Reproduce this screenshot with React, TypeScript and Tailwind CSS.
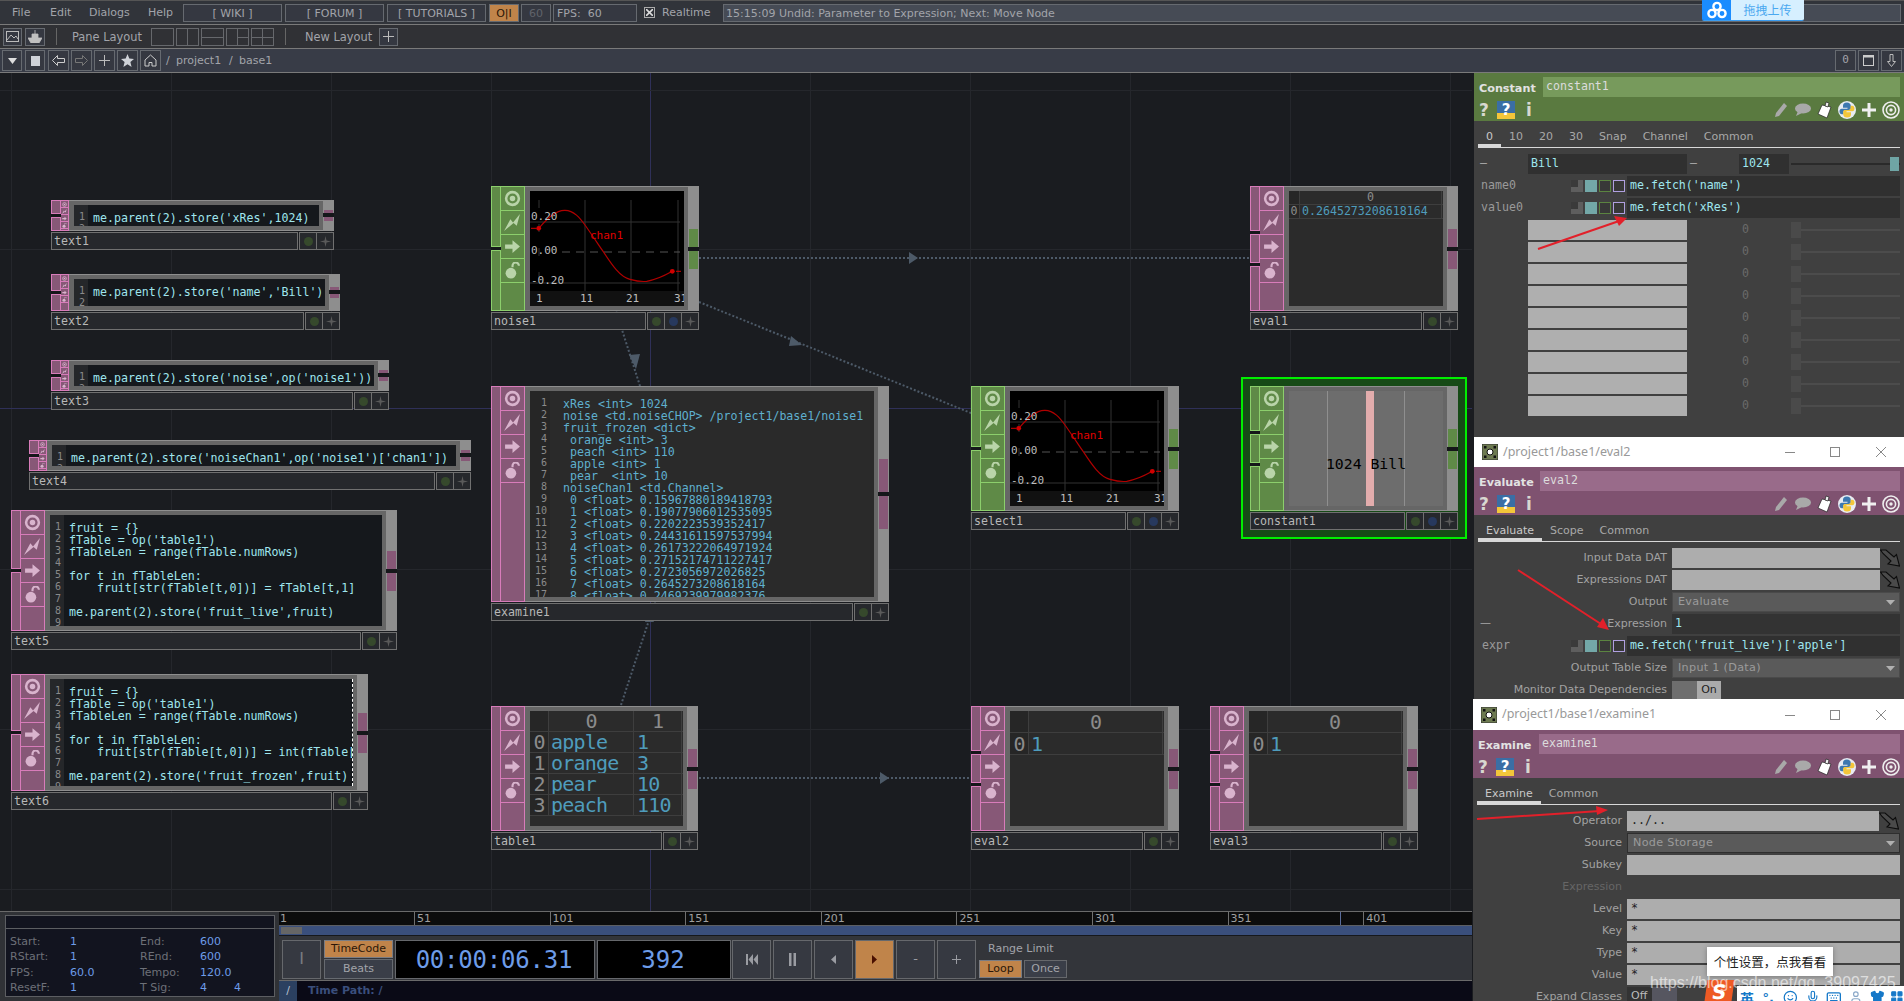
import React from "react";
import { Smile, Mic, Keyboard, User, Shirt, LayoutGrid } from "lucide-react";

const SANS = "[font-family:'DejaVu_Sans',sans-serif]";
const MONO = "[font-family:'DejaVu_Sans_Mono',monospace]";
const BTN = "border border-[#666a70] bg-[#353841]";

/* ---------- node side icons ---------- */
function Target({ s = 16, c = "#fff" }: { s?: number; c?: string }) {
  return (
    <svg width={s} height={s} viewBox="0 0 16 16">
      <circle cx="8" cy="8" r="6" fill="none" stroke={c} strokeWidth="2.4" />
      <circle cx="8" cy="8" r="2.6" fill={c} />
    </svg>
  );
}
function Bolt({ s = 16, c = "#fff" }: { s?: number; c?: string }) {
  return (
    <svg width={s} height={s} viewBox="0 0 16 16">
      <path d="M0 16 L6 5 L8.5 8 L15 0 L12 11 L9 8.5 Z" fill={c} />
    </svg>
  );
}
function RArrow({ s = 16, c = "#fff" }: { s?: number; c?: string }) {
  return (
    <svg width={s} height={s} viewBox="0 0 16 16">
      <path d="M1 6 H8 V2 L15 8 L8 14 V10 H1 Z" fill={c} />
    </svg>
  );
}
function OpenLock({ s = 16, c = "#fff" }: { s?: number; c?: string }) {
  return (
    <svg width={s} height={s} viewBox="0 0 16 16">
      <circle cx="6.5" cy="10.5" r="5" fill={c} />
      <path d="M8 5 V3.5 A3 3 0 0 1 14 3.5" fill="none" stroke={c} strokeWidth="2" />
    </svg>
  );
}

/* ---------- node ---------- */
type Kind = "dat" | "chop";
const KIND = {
  dat: { cell: "border-[#d87cba] bg-[#875877]", bar: "bg-[#875877]", icon: "#d9b3cd" },
  chop: { cell: "border-[#8ccf6c] bg-[#5f8a47]", bar: "bg-[#5f8a47]", icon: "#b9d4a9" },
};

function Node(props: {
  x: number; y: number; w: number; h: number; name: string; kind: Kind; small?: boolean;
  notches?: number; barH?: number; blue?: boolean; children?: React.ReactNode;
}) {
  const { x, y, w, h, name, kind, small, notches = 1, barH, blue, children } = props;
  const k = KIND[kind];
  const icons = [Target, Bolt, RArrow, OpenLock];
  const parts = notches === 2 ? [45, 27, 45] : notches === 1 ? [1, 1] : [1];
  const bh = barH ?? (small ? 3 : 18);
  return (
    <div className="absolute flex flex-col" style={{ left: x, top: y - 73, width: w }}>
      <div className="flex" style={{ height: h }}>
        <div className="w-[10px] flex flex-col shrink-0 gap-[3px] bg-[#15171a]">
          {parts.map((p, i) => (
            <div key={i} className={`border ${k.cell} min-h-0`} style={{ flex: p }} />
          ))}
        </div>
        <div className={`${small ? "w-[8px]" : "w-[24px]"} shrink-0 flex flex-col border-r border-t border-b ${k.cell}`}>
          {icons.map((I, i) => (
            <div key={i} className={`${small ? "h-[7px]" : "h-[24px]"} shrink-0 flex items-center justify-center border-b ${k.cell}`}>
              <I s={small ? 5 : 17} c={k.icon} />
            </div>
          ))}
        </div>
        <div className="flex-1 min-w-0 bg-[#666] border-t border-b border-[#8e8e8e] pt-[4px] pb-[4px] pl-[5px] pr-[4px]">
          {children}
        </div>
        <div className="w-[11px] shrink-0 bg-[#8e8e8e] flex flex-col justify-center">
          <div className={`${k.bar} ml-[1px] mr-[1px]`} style={{ height: bh }} />
          <div className="h-[4px] bg-[#15171a]" />
          <div className={`${k.bar} ml-[1px] mr-[1px]`} style={{ height: small ? 4 : bh }} />
        </div>
      </div>
      <div className={`mt-[1px] h-[18px] flex gap-[1px] ${MONO} text-[11.6px] text-[#b8b8b8]`}>
        <div className="flex-1 min-w-0 border border-[#707070] bg-[#26282c] pl-[2px] leading-[17px]">{name}</div>
        <div className="flex border border-[#707070] bg-[#26282c]">
          <div className="w-[17px] flex items-center justify-center border-r border-[#707070]">
            <div className="w-[9px] h-[9px] rounded-full bg-[#36492c]" />
          </div>
          {blue && (
            <div className="w-[17px] flex items-center justify-center border-r border-[#707070]">
              <div className="w-[9px] h-[9px] rounded-full bg-[#27395e]" />
            </div>
          )}
          <div className="w-[16px] flex items-center justify-center">
            <svg width="11" height="11" viewBox="0 0 11 11"><path d="M5.5 0 L6.5 4.5 L11 5.5 L6.5 6.5 L5.5 11 L4.5 6.5 L0 5.5 L4.5 4.5 Z" fill="#5a5a5a" /></svg>
          </div>
        </div>
      </div>
    </div>
  );
}

/* ---------- node contents ---------- */
function Code({ lines, n, g = 14, pl = 5, dark = true, fade = false, edge = false }: { lines: string[]; n: number; g?: number; pl?: number; dark?: boolean; fade?: boolean; edge?: boolean }) {
  return (
    <div className={`h-full flex overflow-hidden ${MONO} text-[11.6px] leading-[12px] ${dark ? "bg-[#15181c]" : "bg-[#2a2a2a]"} ${edge ? "border-r border-dashed border-white" : ""}`}>
      <div className={`shrink-0 pt-[6px] pr-[3px] text-right text-[10px] text-[#8a8a8a] ${dark ? "bg-[#25272a]" : "bg-[#262626]"}`} style={{ width: g }}>
        {Array.from({ length: n }, (_, i) => <div key={i} className="h-[12px]">{i + 1}</div>)}
      </div>
      <div className={`pt-[7px] whitespace-pre ${fade ? "text-[#5fb0cf]" : "text-[#9fe6ee]"}`} style={{ paddingLeft: pl }}>
        {lines.map((l, i) => <div key={i} className="h-[12px]">{l || " "}</div>)}
      </div>
    </div>
  );
}

function Table({ cols, rows, rowH, size, header, big }: { cols: number[]; rows: string[][]; rowH: number; size: number; header: string[]; big?: boolean }) {
  const all = [header, ...rows];
  return (
    <div className={`h-full bg-[#2b2b2b] overflow-hidden ${MONO} ${big ? "tracking-[-0.8px]" : ""}`} style={{ fontSize: size }}>
      {all.map((r, ri) => (
        <div key={ri} className="flex border-b border-[#3e3e3e]" style={{ height: rowH }}>
          {r.map((c, ci) => (
            <div
              key={ci}
              className={`shrink-0 border-r border-[#3e3e3e] overflow-hidden whitespace-nowrap flex items-center ${
                ri === 0 ? "justify-center text-[#8c8c8c]" : ci === 0 ? "justify-center text-[#8c8c8c] bg-[#262626]" : ci === 2 ? "pl-[3px] text-[#4f9cbc]" : "pl-[2px] text-[#4f9cbc]"
              } ${ri === 0 && ci === 0 ? "bg-[#262626]" : ""}`}
              style={{ width: cols[ci] }}
            >
              {c}
            </div>
          ))}
        </div>
      ))}
    </div>
  );
}

function Chart() {
  const f = "'DejaVu Sans Mono',monospace";
  return (
    <svg width="154" height="115" viewBox="0 0 154 115" className="block bg-black">
      <g stroke="#333" strokeWidth="1">
        <line x1="0" x2="150" y1="31" y2="31" />
        <line x1="0" x2="150" y1="92" y2="92" />
        <line x1="55" x2="55" y1="9" y2="100" />
        <line x1="101" x2="101" y1="9" y2="100" />
        <line x1="148" x2="148" y1="9" y2="100" />
        <line x1="9" x2="9" y1="9" y2="100" strokeDasharray="8 16" />
      </g>
      <line x1="32" x2="150" y1="61" y2="61" stroke="#555" strokeDasharray="8 6" />
      <rect x="0" y="100" width="154" height="15" fill="#111" />
      <path d="M8.7 37.3 C18 27 26 19 35 19.3 C44 19.5 50 27 55 34 C62 44 66 50 73.3 60.7 C82 74 90 86 100 88.3 C106 90 111 91 116.7 90.3 C125 89 134 85 142.3 80.3" fill="none" stroke="#b00000" strokeWidth="1.2" />
      <circle cx="8.7" cy="37.3" r="2.4" fill="#d00000" />
      <circle cx="142.3" cy="80.3" r="2.4" fill="#d00000" />
      <line x1="1" x2="6" y1="37.3" y2="37.3" stroke="#d00000" />
      <line x1="146" x2="151" y1="80.3" y2="80.3" stroke="#d00000" />
      <g fontFamily={f} fontSize="11" fill="#bdbdbd">
        <text x="1" y="29">0.20</text>
        <text x="1" y="63">0.00</text>
        <text x="1" y="93">-0.20</text>
        <text x="6" y="111">1</text>
        <text x="50" y="111">11</text>
        <text x="96" y="111">21</text>
        <text x="144" y="111">31</text>
      </g>
      <text x="60" y="48" fontFamily={f} fontSize="11" fill="#e00000">chan1</text>
    </svg>
  );
}

/* ---------- param panel pieces ---------- */
function PyIcon() {
  const d = "M9 1.5 C6 1.5 5 2.8 5 4.8 V6.8 H9.5 V7.8 H3.8 C2.2 7.8 1.5 9 1.5 10.5 C1.5 12 2.4 13.2 3.8 13.2 H5.4 V11 C5.4 9.8 6.4 9 7.5 9 H11 C12 9 12.8 8.3 12.8 7.3 V4.8 C12.8 2.8 11.2 1.5 9 1.5 Z";
  return (
    <svg width="18" height="18" viewBox="0 0 18 18">
      <circle cx="9" cy="9" r="9" fill="#e8ecf2" />
      <path d={d} fill="#3d78b0" />
      <path d={d} fill="#f3c63a" transform="rotate(180 9 9)" />
    </svg>
  );
}
function Head({ title, name, tw, bg, field }: { title: string; name: string; tw: string; bg: string; field: string }) {
  return (
    <div className={`h-[48px] shrink-0 ${bg} flex flex-col`}>
      <div className="h-[25px] pt-[4px] flex">
        <div className={`${tw} pl-[5px] pt-[4px] font-bold text-[11.2px] leading-[15px] text-[#e2e2e2]`}>{title}</div>
        <div className={`flex-1 mr-[4px] h-[20px] ${field} pl-[3px] ${MONO} text-[11.6px] leading-[19px] text-[#dcdcdc]`}>{name}</div>
      </div>
      <div className="flex-1 flex items-center pl-[5px] pr-[4px]">
        <span className="font-bold text-[17px] text-[#d8d8d0] w-[18px] leading-[18px]">?</span>
        <div className="w-[18px] h-[18px] relative overflow-hidden bg-[#3a6ea5] text-center font-bold text-[15px] leading-[18px] text-white">
          <div className="absolute left-0 right-0 bottom-0 h-[6px] bg-[#f3c63a]" />
          <span className="relative">?</span>
        </div>
        <span className="font-bold text-[17px] text-[#d8d8d0] ml-[11px] leading-[18px]">i</span>
        <div className="flex-1" />
        <svg width="14" height="16" viewBox="0 0 14 16" className="mr-[6px]"><path d="M10 1 L13 4 L5 14 L1 15 L2 11 Z" fill="#a9a9a9" /></svg>
        <svg width="17" height="13" viewBox="0 0 17 13" className="mr-[5px]"><ellipse cx="9" cy="5.5" rx="8" ry="5" fill="#a9a9a9" /><path d="M4 8 L2 13 L8 10 Z" fill="#a9a9a9" /></svg>
        <svg width="18" height="18" viewBox="0 0 18 18" className="mr-[4px]"><path d="M6 4 L15 6 L11 17 L2 13 Z" fill="#fff" stroke="#222" strokeWidth=".7" /><path d="M10 1 L13 2 L12 6 L9 5 Z" fill="#eee" stroke="#222" strokeWidth=".7" /></svg>
        <PyIcon />
        <svg width="14" height="14" viewBox="0 0 14 14" className="ml-[6px] mr-[6px]"><path d="M5.5 0 H8.5 V5.5 H14 V8.5 H8.5 V14 H5.5 V8.5 H0 V5.5 H5.5 Z" fill="#f0f0f0" /></svg>
        <svg width="18" height="18" viewBox="0 0 18 18"><circle cx="9" cy="9" r="8" fill="none" stroke="#eee" strokeWidth="1.6" /><circle cx="9" cy="9" r="4.6" fill="none" stroke="#eee" strokeWidth="1.6" /><circle cx="9" cy="9" r="1.7" fill="#eee" /></svg>
      </div>
    </div>
  );
}
function Tabs({ items }: { items: string[] }) {
  return (
    <div className="h-[27px] shrink-0 ml-[4px] mr-[4px] flex border-b border-[#d8d8d8] text-[11px] text-[#a8a8a8]">
      {items.map((t, i) => (
        <div key={t} className={`pt-[8px] px-[8px] ${i === 0 ? "border-b-[3px] border-[#d8d8d8] text-[#c8c8c8]" : ""}`}>{t}</div>
      ))}
    </div>
  );
}
function WinTitle({ text, h = "h-[30px]" }: { text: string; h?: string }) {
  return (
    <div className={`${h} shrink-0 bg-white flex items-center pl-[8px] [font-family:'Noto_Sans',sans-serif] text-[12.5px] text-[#999]`}>
      <svg width="16" height="16" viewBox="0 0 16 16" className="mr-[5px]">
        <rect x="0" y="0" width="16" height="16" fill="#6d7a50" stroke="#333" />
        <rect x="2" y="2" width="2.5" height="2.5" fill="#111" /><rect x="11.5" y="2" width="2.5" height="2.5" fill="#111" />
        <rect x="2" y="11.5" width="2.5" height="2.5" fill="#111" /><rect x="11.5" y="11.5" width="2.5" height="2.5" fill="#111" />
        <circle cx="8" cy="8" r="3" fill="#fff" stroke="#111" />
      </svg>
      <span>{text}</span>
      <div className="flex-1" />
      <svg width="10" height="10" viewBox="0 0 10 10" className="mr-[35px]"><line x1="0" x2="10" y1="5.5" y2="5.5" stroke="#888" /></svg>
      <svg width="10" height="10" viewBox="0 0 10 10" className="mr-[36px]"><rect x=".5" y=".5" width="9" height="9" fill="none" stroke="#888" /></svg>
      <svg width="10" height="10" viewBox="0 0 10 10" className="mr-[18px]"><path d="M0 0 L10 10 M10 0 L0 10" stroke="#888" /></svg>
    </div>
  );
}
function Squares() {
  return (
    <div className="flex gap-[2px] items-center">
      <div className="w-[12px] h-[12px] bg-[#5e5e5e] relative"><div className="absolute left-0 top-0 w-[7px] h-[7px] bg-[#3a3a3a]" /></div>
      <div className="w-[12px] h-[12px] bg-[#73a8a8]" />
      <div className="w-[12px] h-[12px] border border-[#5b8440] bg-[#383838]" />
      <div className="w-[12px] h-[12px] border border-[#b0a0e0] bg-[#383838]" />
    </div>
  );
}
function DropArrow() {
  return (
    <svg width="20" height="18" viewBox="0 0 20 18" className="shrink-0">
      <path d="M0.5 1 H6 L14 8 L16.5 5.5 L19.5 17 L8 15 L11 12 L3 4.5 Z" fill="#4a4a4a" stroke="#0c0c0c" strokeWidth="1.1" />
    </svg>
  );
}
function Row({ label, lw, dim, dash, children }: { label: string; lw: string; dim?: boolean; dash?: boolean; children: React.ReactNode }) {
  return (
    <div className="h-[22px] flex items-center">
      <div className={`${lw} shrink-0 relative text-right pr-[5px] pt-[1px] text-[11px] ${dim ? "text-[#666]" : "text-[#a2a2a2]"}`}>
        {dash && <span className="absolute left-[6px] top-0 text-[#aaa]">—</span>}
        {label}
      </div>
      {children}
    </div>
  );
}
function Gray({ children, w = "flex-1" }: { children?: React.ReactNode; w?: string }) {
  return <div className={`${w} h-[20px] bg-[#adadad] pl-[4px] ${MONO} text-[11.6px] leading-[18px] text-[#222]`}>{children}</div>;
}
function Select({ text, dark }: { text: string; dark?: boolean }) {
  return (
    <div className={`flex-1 mr-[4px] h-[20px] bg-[#5a5a5a] border ${dark ? "border-[#2e2e2e]" : "border-[#4a4a4a]"} flex items-center pl-[5px] pr-[4px] text-[11.2px] text-[#9a9a9a]`}>
      <span className="flex-1 tracking-[0.3px]">{text}</span>
      <svg width="9" height="5" viewBox="0 0 9 5"><path d="M0 0 H9 L4.5 5 Z" fill="#b0b0b0" /></svg>
    </div>
  );
}

/* ---------- toolbar small ---------- */
function LayoutBtn({ children }: { children?: React.ReactNode }) {
  return <div className="w-[23px] h-[18px] border border-[#66686c] relative flex-none">{children}</div>;
}

const text5 = ["fruit = {}", "fTable = op('table1')", "fTableLen = range(fTable.numRows)", "", "for t in fTableLen:", "    fruit[str(fTable[t,0])] = fTable[t,1]", "", "me.parent(2).store('fruit_live',fruit)"];
const text6 = ["fruit = {}", "fTable = op('table1')", "fTableLen = range(fTable.numRows)", "", "for t in fTableLen:", "    fruit[str(fTable[t,0])] = int(fTable[t,1])", "", "me.parent(2).store('fruit_frozen',fruit)"];
const examine = [
  "xRes <int> 1024", "noise <td.noiseCHOP> /project1/base1/noise1", "fruit_frozen <dict>", " orange <int> 3", " peach <int> 110", " apple <int> 1", " pear  <int> 10", "noiseChan1 <td.Channel>",
  " 0 <float> 0.15967880189418793", " 1 <float> 0.19077906012535095", " 2 <float> 0.2202223539352417", " 3 <float> 0.24431611597537994", " 4 <float> 0.26173222064971924", " 5 <float> 0.27152174711227417", " 6 <float> 0.2723056972026825", " 7 <float> 0.2645273208618164", " 8 <float> 0.2469239979982376",
];

const vLines = [11, 171, 331, 491, 650, 810, 970, 1130, 1290, 1450];
const hLines = [90, 249, 408, 569, 729, 889];
const ticks = ["51", "101", "151", "201", "251", "301", "351", "401"];

function Transport({ children, active }: { children: React.ReactNode; active?: boolean }) {
  return (
    <div className={`w-[39px] h-[39px] shrink-0 border border-[#66686c] flex items-center justify-center text-[#9a9ca2] ${active ? "bg-[#c0844a]" : "bg-[#363941]"}`}>
      {children}
    </div>
  );
}

export default function App() {
  return (
    <div className={`relative w-[1904px] h-[1001px] overflow-hidden bg-[#1a1c20] ${SANS}`}>
      {/* row 1 */}
      <div className="h-[25px] bg-[#31343a] border-t border-[#555] border-b border-b-[#7a7a7a] flex items-center pl-[12px] text-[11px] text-[#a2a4aa]">
        <span className="w-[38px] pt-[1px]">File</span>
        <span className="w-[39px] pt-[1px]">Edit</span>
        <span className="w-[59px] pt-[1px]">Dialogs</span>
        <span className="w-[35px] pt-[1px]">Help</span>
        <div className={`w-[99px] h-[18px] ${BTN} text-center leading-[17px]`}>[ WIKI ]</div>
        <div className={`w-[99px] h-[18px] ml-[3px] ${BTN} text-center leading-[17px]`}>[ FORUM ]</div>
        <div className={`w-[99px] h-[18px] ml-[3px] ${BTN} text-center leading-[17px]`}>[ TUTORIALS ]</div>
        <div className="w-[30px] h-[18px] ml-[3px] border border-[#666a70] bg-[#c0844a] text-center leading-[17px] text-[#2a1608]">O|I</div>
        <div className={`w-[30px] h-[18px] ml-[2px] ${BTN} text-center leading-[17px] text-[#60636a]`}>60</div>
        <div className={`w-[84px] h-[18px] ml-[2px] ${BTN} pl-[3px] leading-[17px] whitespace-pre`}>FPS:  60</div>
        <div className="w-[11px] h-[11px] ml-[7px] border border-[#aaa] flex items-center justify-center">
          <svg width="7" height="7" viewBox="0 0 7 7"><path d="M0 0 L7 7 M7 0 L0 7" stroke="#ddd" strokeWidth="1.6" /></svg>
        </div>
        <span className="ml-[7px] w-[61px] pt-[1px]">Realtime</span>
        <div className="flex-1 h-[18px] mr-[3px] border border-[#666a70] bg-[#464b55] pl-[2px] leading-[17px] whitespace-pre">15:15:09 Undid: Parameter to Expression; Next: Move Node</div>
      </div>
      {/* row 2 */}
      <div className="h-[24px] bg-[#303135] border-b border-[#7a7a7a] flex items-center pl-[3px] text-[11.4px] text-[#a2a4aa]">
        <div className={`w-[19px] h-[18px] ${BTN} flex items-center justify-center`}>
          <svg width="13" height="11" viewBox="0 0 13 11"><rect x=".5" y=".5" width="12" height="10" fill="none" stroke="#bbb" /><path d="M1 9 L5 4 L8 7 L10 5 L12 8" fill="none" stroke="#bbb" /></svg>
        </div>
        <div className={`w-[20px] h-[18px] ml-[3px] ${BTN} flex items-center justify-center`}>
          <svg width="14" height="13" viewBox="0 0 14 13"><path d="M7 0 V4 M4 4 H10 V8 H14 L11 13 H3 L0 8 H4 Z" fill="#c0c0c0" stroke="#c0c0c0" strokeWidth=".8" /></svg>
        </div>
        <div className="w-px h-[17px] bg-[#666] ml-[11px]" />
        <span className="ml-[15px] w-[79px] pt-[2px]">Pane Layout</span>
        <LayoutBtn />
        <div className="ml-[2px]"><LayoutBtn><div className="absolute left-[10px] top-0 bottom-0 w-px bg-[#66686c]" /></LayoutBtn></div>
        <div className="ml-[2px]"><LayoutBtn><div className="absolute left-0 right-0 top-[8px] h-px bg-[#66686c]" /></LayoutBtn></div>
        <div className="ml-[2px]"><LayoutBtn><div className="absolute left-[10px] top-0 bottom-0 w-px bg-[#66686c]" /><div className="absolute left-[10px] right-0 top-[8px] h-px bg-[#66686c]" /></LayoutBtn></div>
        <div className="ml-[2px]"><LayoutBtn><div className="absolute left-[10px] top-0 bottom-0 w-px bg-[#66686c]" /><div className="absolute left-0 right-0 top-[8px] h-px bg-[#66686c]" /></LayoutBtn></div>
        <div className="w-px h-[17px] bg-[#666] ml-[11px]" />
        <span className="ml-[19px] w-[74px] pt-[2px]">New Layout</span>
        <div className={`w-[19px] h-[18px] ${BTN} flex items-center justify-center`}>
          <svg width="11" height="11" viewBox="0 0 11 11"><path d="M5.5 0 V11 M0 5.5 H11" stroke="#bbb" /></svg>
        </div>
      </div>
      {/* row 3 */}
      <div className="h-[24px] bg-[#383c47] border-b border-[#7a7a7a] flex items-center pl-[2px] pr-[2px] text-[11px] text-[#a2a4aa]">
        <div className={`w-[20px] h-[21px] ${BTN} flex items-center justify-center`}><svg width="9" height="6" viewBox="0 0 9 6"><path d="M0 0 H9 L4.5 6 Z" fill="#ddd" /></svg></div>
        <div className={`w-[20px] h-[21px] ml-[3px] ${BTN} flex items-center justify-center`}><div className="w-[9px] h-[10px] bg-[#cfd2d8]" /></div>
        <div className={`w-[21px] h-[21px] ml-[3px] ${BTN} flex items-center justify-center`}><svg width="13" height="11" viewBox="0 0 13 11"><path d="M5.5 .5 L.5 5.5 L5.5 10.5 V7.5 H12.5 V3.5 H5.5 Z" fill="none" stroke="#ccc" /></svg></div>
        <div className={`w-[21px] h-[21px] ml-[2px] ${BTN} flex items-center justify-center`}><svg width="13" height="11" viewBox="0 0 13 11"><path d="M7.5 .5 L12.5 5.5 L7.5 10.5 V7.5 H.5 V3.5 H7.5 Z" fill="none" stroke="#777" /></svg></div>
        <div className={`w-[21px] h-[21px] ml-[2px] ${BTN} flex items-center justify-center`}><svg width="11" height="11" viewBox="0 0 11 11"><path d="M5.5 0 V11 M0 5.5 H11" stroke="#bbb" /></svg></div>
        <div className={`w-[21px] h-[21px] ml-[2px] ${BTN} flex items-center justify-center`}><svg width="13" height="13" viewBox="0 0 13 13"><path d="M6.5 0 L8.3 4.6 L13 5 L9.4 8 L10.6 13 L6.5 10.3 L2.4 13 L3.6 8 L0 5 L4.7 4.6 Z" fill="#cfd2d8" /></svg></div>
        <div className={`w-[21px] h-[21px] ml-[2px] ${BTN} flex items-center justify-center`}><svg width="13" height="13" viewBox="0 0 13 13"><path d="M6.5 1 L12 6 V12 H8 V8.5 H5 V12 H1 V6 Z" fill="none" stroke="#ccc" /></svg></div>
        <span className="ml-[5px] pt-[1px] w-[10px]">/</span>
        <span className="pt-[1px] w-[53px]">project1</span>
        <span className="pt-[1px] w-[10px]">/</span>
        <span className="pt-[1px]">base1</span>
        <div className="flex-1" />
        <div className={`w-[21px] h-[21px] ${BTN} flex items-center justify-center ${MONO}`}>0</div>
        <div className={`w-[21px] h-[21px] ml-[2px] ${BTN} flex items-center justify-center`}><svg width="11" height="11" viewBox="0 0 11 11"><rect x=".5" y=".5" width="10" height="10" fill="none" stroke="#ccc" /><rect x="0" y="0" width="11" height="2.5" fill="#ccc" /></svg></div>
        <div className={`w-[21px] h-[21px] ml-[2px] ${BTN} flex items-center justify-center`}><svg width="9" height="13" viewBox="0 0 9 13"><path d="M3 .5 H6 V7.5 H8.5 L4.5 12.5 L.5 7.5 H3 Z" fill="none" stroke="#bbb" /></svg></div>
      </div>

      <div className="flex h-[928px]">
        {/* left column */}
        <div className="w-[1472px] flex flex-col shrink-0">
          {/* network */}
          <div className="relative h-[838px] overflow-hidden bg-[#1a1c20]">
            {vLines.map((x) => (
              <div key={x} className={`absolute top-0 bottom-0 w-px ${x === 650 ? "bg-[#2f3058]" : "bg-[#25272c]"}`} style={{ left: x }} />
            ))}
            {hLines.map((y) => (
              <div key={y} className={`absolute left-0 right-0 h-px ${y === 408 ? "bg-[#2f3058]" : "bg-[#25272c]"}`} style={{ top: y - 73 }} />
            ))}

            {/* wires */}
            <svg className="absolute left-0 top-0" width="1472" height="838" viewBox="0 73 1472 838">
              <g stroke="#4d5a68" strokeWidth="2" strokeDasharray="2 2" fill="none">
                <line x1="699" y1="258" x2="1252" y2="258" />
                <line x1="699" y1="302" x2="1010" y2="429" />
                <line x1="615" y1="308" x2="640" y2="386" />
                <line x1="621" y1="705" x2="655" y2="602" />
                <line x1="699" y1="778" x2="971" y2="778" />
              </g>
              <g fill="#4d5a68">
                <path d="M909 252 L918 258 L909 264 Z" />
                <path d="M791 336 L802 345 L789 346 Z" />
                <path d="M629 355 L636 369 L640 354 Z" />
                <path d="M649 610 L654 622 L645 622 Z" />
                <path d="M880 772 L889 778 L880 784 Z" />
              </g>
            </svg>

            <Node x={51} y={200} w={283} h={31} name="text1" kind="dat" small>
              <Code n={2} lines={["me.parent(2).store('xRes',1024)"]} />
            </Node>
            <Node x={51} y={274} w={289} h={37} name="text2" kind="dat" small>
              <Code n={2} lines={["me.parent(2).store('name','Bill')"]} />
            </Node>
            <Node x={51} y={360} w={338} h={31} name="text3" kind="dat" small>
              <Code n={2} lines={["me.parent(2).store('noise',op('noise1'))"]} />
            </Node>
            <Node x={29} y={440} w={442} h={31} name="text4" kind="dat" small>
              <Code n={2} lines={["me.parent(2).store('noiseChan1',op('noise1')['chan1'])"]} />
            </Node>
            <Node x={11} y={510} w={386} h={121} name="text5" kind="dat">
              <Code n={9} pl={5} lines={text5} />
            </Node>
            <Node x={11} y={674} w={357} h={117} name="text6" kind="dat">
              <Code n={9} pl={5} lines={text6} edge />
            </Node>

            <Node x={491} y={186} w={208} h={125} name="noise1" kind="chop" blue>
              <Chart />
            </Node>
            <Node x={971} y={386} w={208} h={125} name="select1" kind="chop" blue notches={1}>
              <Chart />
            </Node>

            <Node x={491} y={386} w={398} h={216} name="examine1" kind="dat" notches={0} barH={33}>
              <Code n={17} g={20} pl={13} dark={false} fade lines={examine} />
            </Node>

            <Node x={491} y={706} w={207} h={125} name="table1" kind="dat" notches={0}>
              <Table
                big
                cols={[19, 85, 48]}
                rowH={21}
                size={20}
                header={["", "0", "1"]}
                rows={[["0", "apple", "1"], ["1", "orange", "3"], ["2", "pear", "10"], ["3", "peach", "110"]]}
              />
            </Node>
            <Node x={971} y={706} w={208} h={125} name="eval2" kind="dat" notches={2}>
              <Table big cols={[19, 134]} rowH={22} size={20} header={["", "0"]} rows={[["0", "1"]]} />
            </Node>
            <Node x={1210} y={706} w={208} h={125} name="eval3" kind="dat" notches={2}>
              <Table big cols={[19, 134]} rowH={22} size={20} header={["", "0"]} rows={[["0", "1"]]} />
            </Node>
            <Node x={1250} y={186} w={208} h={125} name="eval1" kind="dat" notches={2}>
              <Table cols={[11, 142]} rowH={14} size={11.6} header={["", "0"]} rows={[["0", "0.2645273208618164"]]} />
            </Node>

            {/* selected */}
            <div className="absolute border-2 border-[#00ee00] bg-[#164a16]" style={{ left: 1241, top: 377 - 73, width: 226, height: 162 }} />
            <Node x={1250} y={386} w={208} h={125} name="constant1" kind="chop" notches={2} blue>
              <div className={`relative h-full bg-[#6d6d6d] flex items-center justify-center pt-[32px] ${MONO} text-[14.8px] text-black`}>
                <div className="absolute left-[38px] top-0 bottom-0 w-px bg-[#8f8f8f]" />
                <div className="absolute left-[115px] top-0 bottom-0 w-px bg-[#8f8f8f]" />
                <div className="absolute left-[77px] top-0 bottom-0 w-[8px] bg-[#e3adad]" />
                <span className="relative whitespace-pre">1024 Bill</span>
              </div>
            </Node>
          </div>

          {/* bottom bar */}
          <div className="h-[90px] bg-[#303236] border-t border-[#6a6a6a] flex">
            <div className="w-[279px] shrink-0 p-[4px] pl-[5px] pt-[3px]">
              <div className="h-[82px] w-[270px] border border-[#5c5e62] bg-[#12141f] text-[11px]">
                <div className="h-[13px] border-b border-[#5c5e62]" />
                <div className="grid grid-cols-[60px_70px_60px_34px_34px] pl-[4px] pt-[5px] leading-[15.4px] text-[#6d7078]">
                  <span>Start:</span><span className="text-[#6d9ce8]">1</span><span>End:</span><span className="text-[#6d9ce8]">600</span><span />
                  <span>RStart:</span><span className="text-[#6d9ce8]">1</span><span>REnd:</span><span className="text-[#6d9ce8]">600</span><span />
                  <span>FPS:</span><span className="text-[#6d9ce8]">60.0</span><span>Tempo:</span><span className="text-[#6d9ce8]">120.0</span><span />
                  <span>ResetF:</span><span className="text-[#6d9ce8]">1</span><span>T Sig:</span><span className="text-[#6d9ce8]">4</span><span className="text-[#6d9ce8]">4</span>
                </div>
              </div>
            </div>
            <div className="flex-1 min-w-0 flex flex-col">
              <div className="relative h-[14px] bg-[#0c0c0c] border-b border-[#5c5e62] flex text-[11px] leading-[13px] text-[#a0a0a0]">
                <div className="w-[135px] shrink-0 pl-[1px]">1</div>
                {ticks.map((t) => (
                  <div key={t} className="w-[135.6px] shrink-0 border-l border-[#707070] pl-[2px]">{t}</div>
                ))}
                <div className="absolute left-[1061px] top-0 bottom-0 w-[1px] bg-[#5a6c9a]" />
              </div>
              <div className="h-[10px] bg-[#3a4f7c] border-b border-[#16181c] flex pl-[2px] pt-[1px]">
                <div className="w-[21px] h-[7px] bg-[#666]" />
              </div>
              <div className="h-[45px] bg-[#33353a] border-b border-[#6a6a6a] flex items-center pl-[3px] pt-[2px] gap-[2px]">
                <Transport><span className="text-[#7a7c82]">I</span></Transport>
                <div className="w-[69px] ml-[1px] flex flex-col gap-[1px]">
                  <div className="h-[18px] border border-[#7a7c82] bg-[#c0844a] text-center text-[11px] leading-[16px] text-[#2a1608]">TimeCode</div>
                  <div className="h-[20px] border border-[#666a70] bg-[#3a3e48] text-center text-[11px] leading-[18px] text-[#a2a4aa]">Beats</div>
                </div>
                <div className={`w-[200px] h-[39px] bg-black border border-[#66686c] flex items-center justify-center pt-[2px] pr-[2px] ${MONO} text-[24px] tracking-[-0.2px] text-[#6d9ce8]`}>00:00:06.31</div>
                <div className={`w-[134px] h-[39px] bg-black border border-[#66686c] flex items-center justify-center pt-[2px] pr-[2px] ${MONO} text-[24px] text-[#6d9ce8]`}>392</div>
                <div className="-ml-[1px]"><Transport><svg width="12" height="11" viewBox="0 0 12 11"><path d="M0 0 H2 V11 H0 Z M7 0 V11 L2.5 5.5 Z M12 0 V11 L7.5 5.5 Z" fill="#9a9ca2" /></svg></Transport></div>
                <Transport><svg width="7" height="13" viewBox="0 0 7 13"><path d="M0 0 H2.5 V13 H0 Z M4.5 0 H7 V13 H4.5 Z" fill="#9a9ca2" /></svg></Transport>
                <Transport><svg width="5" height="9" viewBox="0 0 5 9"><path d="M5 0 V9 L0 4.5 Z" fill="#9a9ca2" /></svg></Transport>
                <Transport active><svg width="5" height="9" viewBox="0 0 5 9"><path d="M0 0 V9 L5 4.5 Z" fill="#4a0f00" /></svg></Transport>
                <Transport><span className="text-[13px]">-</span></Transport>
                <Transport><svg width="9" height="9" viewBox="0 0 9 9"><path d="M4.5 0 V9 M0 4.5 H9" stroke="#9a9ca2" /></svg></Transport>
                <div className="ml-[1px] flex flex-col text-[11px]">
                  <div className="h-[20px] pl-[9px] pt-[1px] text-[#a2a4aa]">Range Limit</div>
                  <div className="flex gap-[2px]">
                    <div className="w-[43px] h-[18px] border border-[#7a7c82] bg-[#c0844a] text-center leading-[16px] text-[#2a1608]">Loop</div>
                    <div className="w-[43px] h-[18px] border border-[#66686c] bg-[#3a3e48] text-center leading-[16px] text-[#a2a4aa]">Once</div>
                  </div>
                </div>
              </div>
              <div className="flex-1 bg-[#0a0a16] flex items-center text-[11px] font-bold text-[#3a4f7c]">
                <div className="w-[18px] h-full bg-[#2b4060] text-center leading-[20px] text-[#b8c0d0] font-normal">/</div>
                <span className="ml-[11px]">Time Path: /</span>
              </div>
            </div>
          </div>
        </div>

        {/* parameter panels */}
        <div className="w-[432px] shrink-0 flex flex-col pl-[2px] bg-[#1a1c20]">
          <div className="h-[364px] shrink-0 bg-[#404040] overflow-hidden">
            <Head title="Constant" name="constant1" tw="w-[69px]" bg="bg-[#5a7a40]" field="bg-[#779a5c]" />
            <Tabs items={["0", "10", "20", "30", "Snap", "Channel", "Common"]} />
            <div className={`pt-[5px] ${MONO} text-[11.6px]`}>
              <div className="h-[22px] flex items-center">
                <span className="w-[54px] pl-[6px] text-[#aaa]">—</span>
                <div className="w-[159px] h-[20px] bg-[#303030] pl-[3px] leading-[19px] text-[#9fe6ee]">Bill</div>
                <span className="w-[52px] pl-[3px] text-[#aaa]">—</span>
                <div className="w-[50px] h-[20px] bg-[#303030] pl-[3px] leading-[19px] text-[#9fe6ee]">1024</div>
                <div className="flex-1 relative h-[20px] ml-[2px] mr-[4px]">
                  <div className="absolute left-0 right-0 top-[9px] h-[2px] bg-[#2a2a2a]" />
                  <div className="absolute right-[1px] top-[3px] w-[9px] h-[14px] bg-[#6fa5a5]" />
                </div>
              </div>
              {[["name0", "me.fetch('name')"], ["value0", "me.fetch('xRes')"]].map(([l, e]) => (
                <div key={l} className="h-[22px] flex items-center">
                  <span className="w-[97px] pl-[7px] text-[#9a9a9a]">{l}</span>
                  <Squares />
                  <div className="flex-1 h-[20px] ml-[2px] mr-[4px] bg-[#303030] pl-[3px] leading-[18px] text-[#9fe6ee]">{e}</div>
                </div>
              ))}
              {Array.from({ length: 9 }, (_, i) => (
                <div key={i} className="h-[22px] flex items-center">
                  <div className="w-[54px]" />
                  <div className="w-[159px] h-[20px] bg-[#afafaf]" />
                  <div className="w-[52px]" />
                  <div className="w-[50px] pl-[3px] text-[#6a6a6a]">0</div>
                  <div className="flex-1 h-[16px] ml-[2px] mr-[4px] flex items-center">
                    <div className="w-[10px] h-[16px] bg-[#4a4a4a]" />
                    <div className="flex-1 h-[2px] bg-[#4c4c4c]" />
                  </div>
                </div>
              ))}
            </div>
          </div>

          <div className="h-[262px] shrink-0 bg-[#404040] overflow-hidden flex flex-col">
            <WinTitle text="/project1/base1/eval2" />
            <Head title="Evaluate" name="eval2" tw="w-[66px]" bg="bg-[#7f5270]" field="bg-[#996b8a]" />
            <Tabs items={["Evaluate", "Scope", "Common"]} />
            <div className="pt-[5px]">
              <Row label="Input Data DAT" lw="w-[198px]"><Gray w="w-[208px]" /><DropArrow /></Row>
              <Row label="Expressions DAT" lw="w-[198px]"><Gray w="w-[208px]" /><DropArrow /></Row>
              <Row label="Output" lw="w-[198px]"><Select text="Evaluate" /></Row>
              <Row label="Expression" lw="w-[198px]" dash>
                <div className={`flex-1 mr-[4px] h-[20px] bg-[#333] pl-[3px] ${MONO} text-[11.6px] leading-[18px] text-[#9fe6ee]`}>1</div>
              </Row>
              <div className={`h-[22px] flex items-center ${MONO} text-[11.6px]`}>
                <span className="w-[97px] pl-[8px] text-[#9a9a9a]">expr</span>
                <Squares />
                <div className="flex-1 h-[20px] ml-[2px] mr-[4px] bg-[#303030] pl-[3px] leading-[18px] text-[#9fe6ee]">me.fetch('fruit_live')['apple']</div>
              </div>
              <Row label="Output Table Size" lw="w-[198px]"><Select text="Input 1 (Data)" /></Row>
              <Row label="Monitor Data Dependencies" lw="w-[198px]">
                <div className="w-[25px] h-[19px] bg-[#6e6e6e]" />
                <div className="w-[24px] h-[19px] bg-[#aaa] text-center text-[11px] leading-[18px] text-[#222]">On</div>
              </Row>
            </div>
          </div>

          <div className="flex-1 -ml-px bg-[#404040] overflow-hidden flex flex-col">
            <WinTitle text="/project1/base1/examine1" h="h-[31px]" />
            <Head title="Examine" name="examine1" tw="w-[66px]" bg="bg-[#7f5270]" field="bg-[#996b8a]" />
            <Tabs items={["Examine", "Common"]} />
            <div className="pt-[5px]">
              <Row label="Operator" lw="w-[154px]"><Gray w="w-[252px]">../..</Gray><DropArrow /></Row>
              <Row label="Source" lw="w-[154px]"><Select text="Node Storage" dark /></Row>
              <Row label="Subkey" lw="w-[154px]"><div className="flex-1 mr-[4px]"><Gray w="w-full" /></div></Row>
              <Row label="Expression" lw="w-[154px]" dim><div /></Row>
              {["Level", "Key", "Type", "Value"].map((l) => (
                <Row key={l} label={l} lw="w-[154px]"><div className="flex-1 mr-[4px]"><Gray w="w-full">*</Gray></div></Row>
              ))}
              <Row label="Expand Classes" lw="w-[154px]">
                <div className="w-[25px] h-[20px] bg-[#333] pl-[4px] text-[11px] leading-[18px] text-[#bbb]">Off</div>
                <div className="w-[25px] h-[20px] bg-[#565660]" />
              </Row>
            </div>
          </div>
        </div>
      </div>

      {/* annotations over the panels */}
      <svg className="absolute left-0 top-0 pointer-events-none" width="1904" height="1001">
        <g stroke="#e2202a" strokeWidth="2" fill="#e2202a">
          <line x1="1538" y1="249" x2="1622" y2="220" />
          <path d="M1627 218 L1614 216 L1619 226 Z" stroke="none" />
          <line x1="1518" y1="570" x2="1604" y2="626" />
          <path d="M1609 630 L1597 627 L1603 618 Z" stroke="none" />
          <line x1="1477" y1="819" x2="1600" y2="811" />
          <path d="M1608 810 L1596 806 L1597 815 Z" stroke="none" />
        </g>
      </svg>

      {/* upload badge */}
      <div className="absolute left-[1702px] top-0 w-[102px] h-[21px] flex rounded-b-[2px] overflow-hidden border-b border-[#3a9cf0]">
        <div className="w-[29px] bg-[#1a8cff] flex items-center justify-center">
          <svg width="20" height="18" viewBox="0 0 20 18"><g fill="none" stroke="#fff" strokeWidth="2.4"><circle cx="10" cy="5.5" r="3.6" /><circle cx="5" cy="12.5" r="3.6" /><circle cx="15" cy="12.5" r="3.6" /></g></svg>
        </div>
        <div className="flex-1 bg-[#d6efff] text-center [font-family:'Noto_Sans_CJK_SC',sans-serif] text-[12px] leading-[20px] text-[#4aa8f0]">拖拽上传</div>
      </div>

      {/* tooltip */}
      <div className="absolute left-[1707px] top-[947px] w-[126px] h-[29px] bg-white shadow-[0_1px_5px_rgba(0,0,0,0.3)] text-center [font-family:'Noto_Sans_CJK_SC',sans-serif] text-[12.5px] leading-[29px] text-[#222]">
        个性设置，点我看看
      </div>

      {/* ime bar */}
      <div className="absolute left-[1737px] top-[986px] w-[167px] h-[15px] bg-white overflow-hidden flex items-start pt-[4px] text-[#1578c8] pl-[3px]">
        <span className="[font-family:'Noto_Sans_CJK_SC',sans-serif] font-bold text-[14px] leading-[16px] w-[23px]">英</span>
        <span className="font-bold text-[13px] leading-[16px] w-[21px]">°,</span>
        <Smile size={15} className="mr-[8px]" />
        <Mic size={14} className="mr-[7px]" />
        <Keyboard size={16} className="mr-[7px]" />
        <User size={14} className="mr-[7px] text-[#8aa8c8]" />
        <Shirt size={15} className="mr-[6px]" fill="#1578c8" />
        <LayoutGrid size={14} fill="#1578c8" />
      </div>
      <div className="absolute left-[1706px] top-[980px] w-[27px] h-[21px] bg-[#ee5a24] skew-x-[-8deg] text-center font-bold text-[20px] leading-[24px] text-white">S</div>

      {/* watermark */}
      <div className="absolute left-[1650px] top-[973px] [font-family:'Liberation_Sans',sans-serif] text-[16px] leading-[20px] whitespace-nowrap text-[#ffffff99]">
        https://blog.csdn.net/qq_39097425
      </div>
    </div>
  );
}
